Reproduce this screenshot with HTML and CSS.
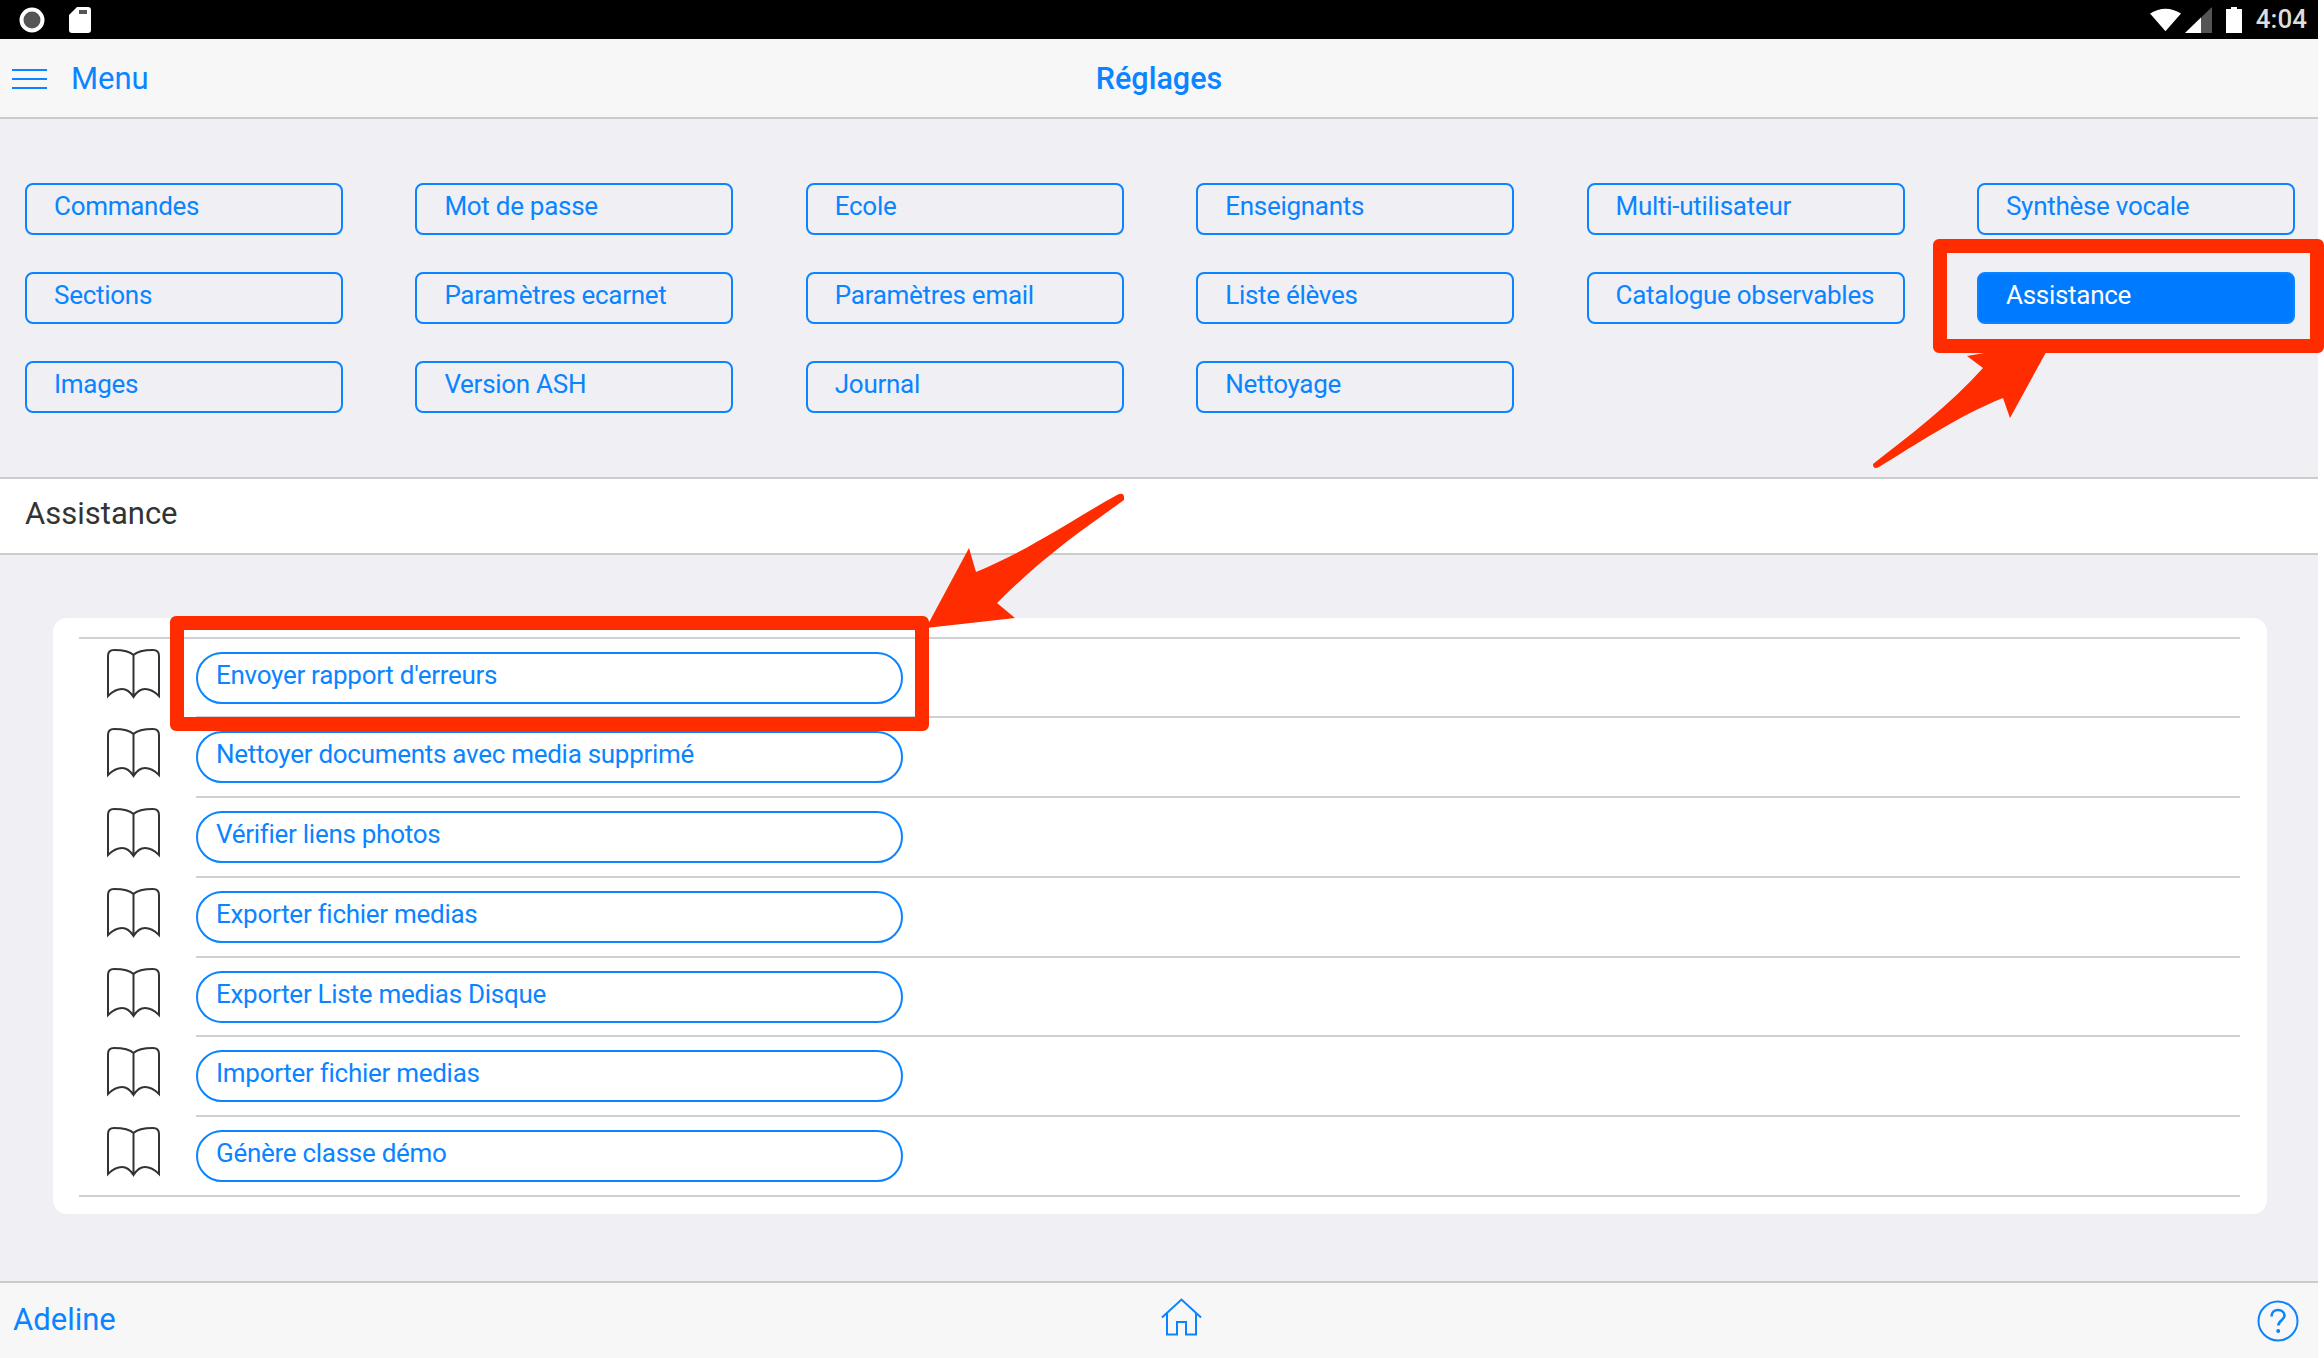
FILE: index.html
```html
<!DOCTYPE html>
<html lang="fr">
<head>
    <meta charset="UTF-8">
    <meta name="viewport" content="width=device-width, initial-scale=1.0">
    <title>Réglages</title>
    <link rel="stylesheet" href="styles.css">
</head>
<body>
    <div class="app">
        <div class="status-bar">
            <div class="status-left">
                <svg class="status-record" width="26" height="26" viewBox="0 0 26 26"><circle cx="13" cy="13" r="10.5" fill="#555" stroke="#fff" stroke-width="4"/></svg>
                <svg class="status-sd" width="22" height="26" viewBox="0 0 22 26"><path d="M8 0H19a3 3 0 0 1 3 3V23a3 3 0 0 1-3 3H3a3 3 0 0 1-3-3V8Z" fill="#fff"/><path d="M10 3h8v4h-8z" fill="#555"/></svg>
            </div>
            <div class="status-right">
                <svg width="31" height="25" viewBox="0 0 33 25"><path d="M0 6Q16.500-4 33 6L16.500 25Z" fill="#fff"/></svg>
                <svg width="27" height="26" viewBox="0 0 27 26"><path d="M0 26L27 0V26Z" fill="#555"/><path d="M0 26L16 10.500V26Z" fill="#fff"/></svg>
                <svg class="status-battery" width="16" height="26" viewBox="0 0 16 26"><path d="M5 0h6v2h5v24H0V2h5z" fill="#fff"/></svg>
                <span class="status-time">4:04</span>
            </div>
        </div>

        <header class="navbar">
            <div class="menu-link">
                <svg width="35" height="20" viewBox="0 0 35 20"><path d="M0 1h35M0 10h35M0 19h35" stroke="#0a84ff" stroke-width="2" fill="none"/></svg>
                <span>Menu</span>
            </div>
            <h1>Réglages</h1>
        </header>

        <section class="settings">
            <a class="tab">Commandes</a>
            <a class="tab">Mot de passe</a>
            <a class="tab">Ecole</a>
            <a class="tab">Enseignants</a>
            <a class="tab">Multi-utilisateur</a>
            <a class="tab">Synthèse vocale</a>
            <a class="tab">Sections</a>
            <a class="tab">Paramètres ecarnet</a>
            <a class="tab">Paramètres email</a>
            <a class="tab">Liste élèves</a>
            <a class="tab">Catalogue observables</a>
            <a class="tab tab-active">Assistance</a>
            <a class="tab">Images</a>
            <a class="tab">Version ASH</a>
            <a class="tab">Journal</a>
            <a class="tab">Nettoyage</a>
        </section>

        <div class="section-title">Assistance</div>

        <main class="content">
            <ul class="card">
                <li class="row">
                    <svg class="book" viewBox="0 0 53 50"><use href="#book"/></svg>
                    <div class="row-main"><a class="pill">Envoyer rapport d'erreurs</a></div>
                </li>
                <li class="row">
                    <svg class="book" viewBox="0 0 53 50"><use href="#book"/></svg>
                    <div class="row-main"><a class="pill">Nettoyer documents avec media supprimé</a></div>
                </li>
                <li class="row">
                    <svg class="book" viewBox="0 0 53 50"><use href="#book"/></svg>
                    <div class="row-main"><a class="pill">Vérifier liens photos</a></div>
                </li>
                <li class="row">
                    <svg class="book" viewBox="0 0 53 50"><use href="#book"/></svg>
                    <div class="row-main"><a class="pill">Exporter fichier medias</a></div>
                </li>
                <li class="row">
                    <svg class="book" viewBox="0 0 53 50"><use href="#book"/></svg>
                    <div class="row-main"><a class="pill">Exporter Liste medias Disque</a></div>
                </li>
                <li class="row">
                    <svg class="book" viewBox="0 0 53 50"><use href="#book"/></svg>
                    <div class="row-main"><a class="pill">Importer fichier medias</a></div>
                </li>
                <li class="row">
                    <svg class="book" viewBox="0 0 53 50"><use href="#book"/></svg>
                    <div class="row-main"><a class="pill">Génère classe démo</a></div>
                </li>
            </ul>
        </main>

        <footer class="footer">
            <span class="footer-name">Adeline</span>
            <svg class="footer-home" width="41" height="38" viewBox="0 0 41 38"><path d="M1 19.500L20.500 1.500L40 19.500M6 15V36.500H16V24H25V36.500H35V15" fill="none" stroke="#0a84ff" stroke-width="2"/></svg>
            <svg class="footer-help" width="42" height="42" viewBox="0 0 42 42">
                <circle cx="21" cy="21" r="19.500" fill="none" stroke="#0a84ff" stroke-width="2"/>
                <path d="M14.500 16.500C14.500 12.500 17.500 10 21 10C24.800 10 27.500 12.500 27.500 15.800C27.500 20 21.300 20.500 21.300 25.500" fill="none" stroke="#0a84ff" stroke-width="2.600"/>
                <circle cx="21.200" cy="31" r="2" fill="#0a84ff"/>
            </svg>
        </footer>
    </div>

    <!-- annotations -->
    <div class="callout callout-tab"></div>
    <div class="callout callout-row"></div>
    <svg class="arrows" width="2324" height="1358" viewBox="0 0 2324 1358">
        <path d="M2050 345L2010 418L2003 398C1960 415 1915 445 1879 467Q1873 470 1873 464C1910 435 1950 405 1983 368L1967 356L1990 352Z" fill="#ff2c00"/>
        <path d="M1124 500C1085 528 1045 555 997 603L1015 618L926 628L969 548L976 572C1030 550 1080 515 1117 495Q1125 491 1124 500Z" fill="#ff2c00"/>
    </svg>

    <svg class="defs" width="0" height="0">
        <symbol id="book" viewBox="0 0 53 50">
            <path d="M26.500 6C22 1.500 14 1 7 1C3 1 1 3 1 7V47C6 42 11 40 15 40C20 40 24 44 26.500 48C29 44 33 40 38 40C42 40 47 42 52 47V7C52 3 50 1 46 1C39 1 31 1.500 26.500 6ZM26.500 6V48" fill="none" stroke="#333" stroke-width="2"/>
        </symbol>
    </svg>
</body>
</html>
```

FILE: styles.css
```css
body {
    margin: 0;
    background-color: #fff;
    font-family: Roboto, sans-serif;
    color: #0a84ff;
}

.app {
    width: 2318px;
    height: 1358px;
    display: flex;
    flex-direction: column;
    background-color: #efeff4;
}

.status-bar {
    height: 39px;
    background-color: #000;
    display: flex;
    justify-content: space-between;
    align-items: center;
    flex: none;
}

.status-left {
    display: flex;
    align-items: center;
    gap: 24px;
    padding-left: 19px;
}

.status-right {
    display: flex;
    align-items: center;
    gap: 4px;
    padding-right: 11px;
}

.status-battery {
    margin-left: 10px;
}

.status-time {
    margin: 0 0 2px 10px;
    color: #ddd;
    font-size: 26px;
    font-weight: 500;
}

.navbar {
    height: 78px;
    flex: none;
    background-color: #f7f7f7;
    border-bottom: 2px solid #ccc;
    display: flex;
    align-items: center;
    position: relative;
}

.navbar h1 {
    margin: 0 auto;
    font-size: 30.5px;
    font-weight: 500;
}

.menu-link {
    position: absolute;
    left: 12px;
    top: 21px;
    display: flex;
    align-items: center;
    gap: 24px;
    font-size: 31px;
}

.settings {
    height: 358px;
    flex: none;
    box-sizing: border-box;
    padding: 64px 23px 0 25px;
    display: grid;
    grid-template-columns: repeat(6, 318px);
    grid-auto-rows: 52px;
    column-gap: 72.4px;
    row-gap: 37px;
}

.tab {
    box-sizing: border-box;
    border: 2px solid #0a84ff;
    border-radius: 8px;
    padding: 3px 0 0 27px;
    font-size: 26px;
    letter-spacing: -0.28px;
    line-height: 36px;
}

.tab-active {
    background-color: #007aff;
    color: #fff;
}

.section-title {
    height: 78px;
    flex: none;
    box-sizing: border-box;
    background-color: #fff;
    border-top: 2px solid #ccc;
    border-bottom: 2px solid #ccc;
    padding-left: 25px;
    font-size: 31px;
    line-height: 70px;
    color: #333;
}

.content {
    flex: 1;
    padding: 63px 51px 0 53px;
}

.card {
    list-style: none;
    margin: 0;
    height: 596px;
    box-sizing: border-box;
    padding: 18.5px 27px 0 26px;
    background-color: #fff;
    border-radius: 14px;
}

.card .row:first-child {
    border-top: 2px solid #d0d0d4;
}

.card .row:last-child {
    border-bottom: 2px solid #d0d0d4;
    height: 77.5px;
}

.row {
    display: flex;
    align-items: flex-start;
    height: 79.8px;
}

.book {
    width: 53px;
    height: 50px;
    margin: 10px 36px 0 28px;
    flex: none;
}

.row-main {
    flex: 1;
    height: 100%;
    box-sizing: border-box;
    padding-top: 13px;
    border-bottom: 2px solid #d0d0d4;
}

.row:last-child .row-main {
    border-bottom: none;
}

.pill {
    display: block;
    box-sizing: border-box;
    width: 707px;
    height: 52px;
    border: 2px solid #0a84ff;
    border-radius: 26px;
    padding: 3px 0 0 18px;
    font-size: 26px;
    letter-spacing: -0.28px;
    line-height: 36px;
}

.footer {
    height: 77px;
    flex: none;
    box-sizing: border-box;
    background-color: #f7f7f7;
    border-top: 2px solid #ccc;
    display: flex;
    align-items: center;
    justify-content: space-between;
    padding: 0 19px 0 13px;
}

.footer-name {
    font-size: 31px;
    margin-bottom: 2px;
}

.footer-home {
    margin: 0 10px 8px 0;
}

/* red annotations lie over the page */
.callout {
    position: absolute;
    box-sizing: border-box;
    border: 14px solid #ff2c00;
    border-radius: 6px;
}

.callout-tab {
    left: 1933px;
    top: 239px;
    width: 391px;
    height: 114px;
}

.callout-row {
    left: 170px;
    top: 616px;
    width: 759px;
    height: 115px;
}

.arrows {
    position: absolute;
    left: 0;
    top: 0;
}

.defs {
    position: absolute;
}
```
